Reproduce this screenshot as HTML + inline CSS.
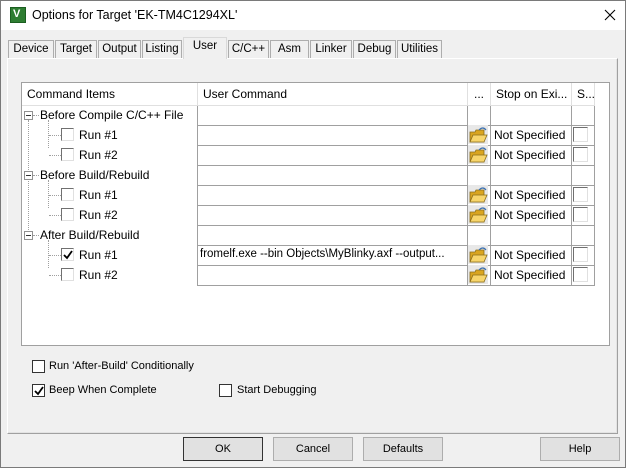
<!DOCTYPE html>
<html><head><style>
*{box-sizing:border-box;margin:0;padding:0}
body{width:626px;height:468px;background:#f0f0f0;font-family:"Liberation Sans",sans-serif;position:relative;overflow:hidden}
.a{position:absolute}
.win{left:0;top:0;width:626px;height:468px;border:1px solid #7a7a7a}
.title{left:1px;top:1px;width:624px;height:29px;background:#fff;font-size:12.5px}
.tab{position:absolute;top:40px;height:18px;border:1px solid #adadad;border-bottom:none;background:#f0f0f0;font-size:11.5px;text-align:center;line-height:17px;color:#000}
.tab.sel{top:37px;height:22px;background:#f0f0f0;z-index:2;border-color:#d9d9d9;line-height:17px}
.panel{left:7px;top:58px;width:611px;height:376px;border:1px solid #fff;border-right-color:#a0a0a0;border-bottom-color:#a0a0a0;box-shadow:inset -1px -1px 0 #e3e3e3}
.tbl{left:21px;top:82px;width:589px;height:264px;background:#fff;border:1px solid #a0a0a0}
.hd{position:absolute;top:0;height:23px;font-size:12px;line-height:22px;padding-left:5px;border-right:1px solid #e0e0e0;border-bottom:1px solid #e0e0e0}
.v{position:absolute;top:0;width:1px;background:#a0a0a0}
.h{position:absolute;height:1px;background:#a0a0a0}
.t{position:absolute;font-size:12px;white-space:nowrap}
.cb{position:absolute;width:13px;height:13px;border:1px solid #333;background:#fff}
.gcb{position:absolute;width:13px;height:13px;border:1px solid #e0e0e0;border-left-color:#707070;border-top-color:#707070;background:#fff}
.btn{position:absolute;top:437px;height:24px;border:1px solid #adadad;background:#e1e1e1;font-size:11px;text-align:center;line-height:22px}
.s{font-size:11px;position:absolute;white-space:nowrap}
.dot{position:absolute;border-left:1px dotted #a0a0a0}
.doth{position:absolute;border-top:1px dotted #a0a0a0;height:0}
.pm{position:absolute;width:9px;height:9px;border:1px solid #919191;background:#fff}
.pm:after{content:"";position:absolute;left:1px;top:3px;width:5px;height:1px;background:#333}
</style></head><body>
<div class="a win"></div>
<div class="a title">
 <div class="a" style="left:9px;top:6px;width:16px;height:16px;background:#2e7d32;border:1px solid #1b5e20"><span style="position:absolute;left:2px;top:0;color:#fff;font-size:11px;font-weight:bold">V</span></div>
 <div class="a" style="left:31px;top:7px">Options for Target 'EK-TM4C1294XL'</div>
 <svg class="a" style="left:603px;top:8px" width="12" height="12"><path d="M1 1L11 11M11 1L1 11" stroke="#000" stroke-width="1.1"/></svg>
</div>
<div class="tab" style="left:8px;width:46px">Device</div>
<div class="tab" style="left:55px;width:42px">Target</div>
<div class="tab" style="left:98px;width:43px">Output</div>
<div class="tab" style="left:142px;width:40px">Listing</div>
<div class="tab sel" style="left:183px;width:44px">User</div>
<div class="tab" style="left:228px;width:41px">C/C++</div>
<div class="tab" style="left:270px;width:39px">Asm</div>
<div class="tab" style="left:310px;width:42px">Linker</div>
<div class="tab" style="left:353px;width:43px">Debug</div>
<div class="tab" style="left:397px;width:45px">Utilities</div>
<div class="a panel"></div>
<div class="a tbl">
 <div class="hd" style="left:0;width:176px">Command Items</div>
 <div class="hd" style="left:176px;width:270px">User Command</div>
 <div class="hd" style="left:446px;width:23px;padding-left:6px">...</div>
 <div class="hd" style="left:469px;width:81px">Stop on Exi...</div>
 <div class="hd" style="left:550px;width:23px">S...</div>
 <div class="v" style="left:175px;top:23px;height:180px"></div>
 <div class="v" style="left:445px;top:23px;height:180px"></div>
 <div class="v" style="left:468px;top:23px;height:180px"></div>
 <div class="v" style="left:549px;top:23px;height:180px"></div>
 <div class="v" style="left:572px;top:23px;height:180px"></div>
 <div class="h" style="left:175px;width:398px;top:42px"></div>
 <div class="h" style="left:175px;width:398px;top:62px"></div>
 <div class="h" style="left:175px;width:398px;top:82px"></div>
 <div class="h" style="left:175px;width:398px;top:102px"></div>
 <div class="h" style="left:175px;width:398px;top:122px"></div>
 <div class="h" style="left:175px;width:398px;top:142px"></div>
 <div class="h" style="left:175px;width:398px;top:162px"></div>
 <div class="h" style="left:175px;width:398px;top:182px"></div>
 <div class="h" style="left:175px;width:398px;top:202px"></div>
 <div class="dot" style="left:6px;top:37px;height:120px"></div>
 <div class="dot" style="left:26px;top:37px;height:28px"></div>
 <div class="dot" style="left:26px;top:97px;height:28px"></div>
 <div class="dot" style="left:26px;top:157px;height:28px"></div>
 <div class="pm" style="left:2px;top:28px"></div>
 <div class="pm" style="left:2px;top:88px"></div>
 <div class="pm" style="left:2px;top:148px"></div>
 <div class="doth" style="left:11px;top:32px;width:6px"></div>
 <div class="doth" style="left:11px;top:92px;width:6px"></div>
 <div class="doth" style="left:11px;top:152px;width:6px"></div>
 <div class="t" style="left:18px;top:25px">Before Compile C/C++ File</div>
 <div class="t" style="left:18px;top:85px">Before Build/Rebuild</div>
 <div class="t" style="left:18px;top:145px">After Build/Rebuild</div>
 <div class="doth" style="left:27px;top:52px;width:12px"></div>
 <div class="doth" style="left:27px;top:72px;width:12px"></div>
 <div class="doth" style="left:27px;top:112px;width:12px"></div>
 <div class="doth" style="left:27px;top:132px;width:12px"></div>
 <div class="doth" style="left:27px;top:172px;width:12px"></div>
 <div class="doth" style="left:27px;top:192px;width:12px"></div>
 <div class="gcb" style="left:39px;top:45px"></div><div class="t" style="left:57px;top:45px">Run #1</div>
 <div class="gcb" style="left:39px;top:65px"></div><div class="t" style="left:57px;top:65px">Run #2</div>
 <div class="gcb" style="left:39px;top:105px"></div><div class="t" style="left:57px;top:105px">Run #1</div>
 <div class="gcb" style="left:39px;top:125px"></div><div class="t" style="left:57px;top:125px">Run #2</div>
 <div class="gcb" style="left:39px;top:165px"><svg style="position:absolute;left:1px;top:1px" width="10" height="10"><path d="M1 5L4 8L9 1" stroke="#000" stroke-width="1.8" fill="none"/></svg></div><div class="t" style="left:57px;top:165px">Run #1</div>
 <div class="gcb" style="left:39px;top:185px"></div><div class="t" style="left:57px;top:185px">Run #2</div>
 <div class="t" style="left:178px;top:165px;font-size:11.5px">fromelf.exe --bin Objects\MyBlinky.axf --output...</div>
</div>
<svg class="a" style="left:0;top:0" width="626" height="468">
 <defs><g id="f"><rect x="0" y="0" width="20" height="19" fill="#e8e8e8"/><path d="M2 7 h5 l1 -2 h8 v12 h-14z" fill="#d9a520" stroke="#8a6d1a" stroke-width=".8"/><path d="M2 17 l3 -7 h14 l-3 7z" fill="#f7d56b" stroke="#8a6d1a" stroke-width=".8"/><path d="M11 5 q4 -4 7 0" fill="none" stroke="#3a6fb0" stroke-width="1.2"/></g></defs>
 <use href="#f" x="468" y="125"/><use href="#f" x="468" y="145"/>
 <use href="#f" x="468" y="185"/><use href="#f" x="468" y="205"/>
 <use href="#f" x="468" y="245"/><use href="#f" x="468" y="265"/>
</svg>
<div class="t" style="left:494px;top:128px">Not Specified</div><div class="gcb" style="left:573px;top:127px;width:15px;height:15px"></div>
<div class="t" style="left:494px;top:148px">Not Specified</div><div class="gcb" style="left:573px;top:147px;width:15px;height:15px"></div>
<div class="t" style="left:494px;top:188px">Not Specified</div><div class="gcb" style="left:573px;top:187px;width:15px;height:15px"></div>
<div class="t" style="left:494px;top:208px">Not Specified</div><div class="gcb" style="left:573px;top:207px;width:15px;height:15px"></div>
<div class="t" style="left:494px;top:248px">Not Specified</div><div class="gcb" style="left:573px;top:247px;width:15px;height:15px"></div>
<div class="t" style="left:494px;top:268px">Not Specified</div><div class="gcb" style="left:573px;top:267px;width:15px;height:15px"></div>
<div class="cb" style="left:32px;top:360px"></div><div class="s" style="left:49px;top:360px">Run 'After-Build' Conditionally</div>
<div class="cb" style="left:32px;top:384px"><svg style="position:absolute;left:1px;top:1px" width="10" height="10"><path d="M1 5L4 8L9 1" stroke="#000" stroke-width="1.8" fill="none"/></svg></div><div class="s" style="left:49px;top:384px">Beep When Complete</div>
<div class="cb" style="left:219px;top:384px"></div><div class="s" style="left:237px;top:384px">Start Debugging</div>
<div class="btn" style="left:183px;width:80px;border:1px solid #333">OK</div>
<div class="btn" style="left:273px;width:80px">Cancel</div>
<div class="btn" style="left:363px;width:80px">Defaults</div>
<div class="btn" style="left:540px;width:80px">Help</div>
</body></html>
